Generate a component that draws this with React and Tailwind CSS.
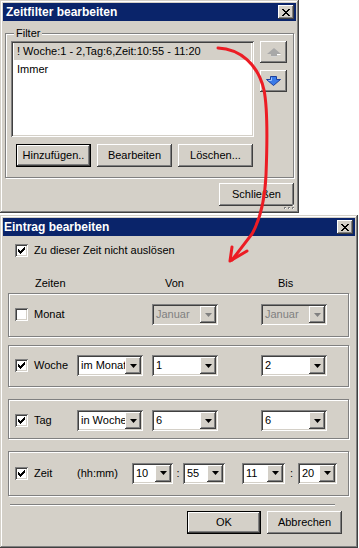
const WIN =
  "shadow-[inset_-1px_-1px_0_#404040,inset_1px_1px_0_#d4d0c8,inset_-2px_-2px_0_#808080,inset_2px_2px_0_#ffffff]";
const RAISED =
  "shadow-[inset_-1px_-1px_0_#404040,inset_1px_1px_0_#ffffff,inset_-2px_-2px_0_#808080,inset_2px_2px_0_#d4d0c8]";
const SUNKEN =
  "shadow-[inset_1px_1px_0_#808080,inset_-1px_-1px_0_#ffffff,inset_2px_2px_0_#404040,inset_-2px_-2px_0_#d4d0c8]";
const ETCHED = "border border-[#808080] shadow-[inset_1px_1px_0_#ffffff,1px_1px_0_#ffffff]";

const CloseGlyph = () => (
  <svg width="8" height="7" viewBox="0 0 8 7" shapeRendering="crispEdges">
    <path
      fill="#000"
      d="M0 0h2v1h-2zM6 0h2v1h-2zM1 1h2v1h-2zM5 1h2v1h-2zM2 2h4v1h-4zM3 3h2v1h-2zM2 4h4v1h-4zM1 5h2v1h-2zM5 5h2v1h-2zM0 6h2v1h-2zM6 6h2v1h-2z"
    />
  </svg>
);

const TitleBar = ({ title, pad }) => (
  <div className={`h-[18px] bg-[#0a246a] flex items-center justify-between ${pad}`}>
    <span className="text-white font-bold text-[12px] leading-none">{title}</span>
    <div className={`${RAISED} bg-[#d4d0c8] w-[16px] h-[14px] mr-[2px] flex items-center justify-center`}>
      <CloseGlyph />
    </div>
  </div>
);

const Button = ({ children, w, def }) => (
  <div
    className={`${def ? "border border-black" : ""} ${w} h-[23px] bg-[#d4d0c8] flex items-center justify-center`}
  >
    <div className={`${RAISED} w-full h-full flex items-center justify-center`}>{children}</div>
  </div>
);

const Check = ({ checked }) => (
  <div className={`${SUNKEN} w-[13px] h-[13px] bg-white shrink-0 flex items-center justify-center`}>
    {checked && (
      <svg width="7" height="7" viewBox="0 0 7 7" shapeRendering="crispEdges">
        <path
          fill="#000"
          d="M6 0h1v1h-1zM5 1h2v1h-2zM0 2h1v1h-1zM4 2h3v1h-3zM0 3h2v1h-2zM3 3h3v1h-3zM0 4h5v1h-5zM1 5h3v1h-3zM2 6h1v1h-1z"
        />
      </svg>
    )}
  </div>
);

const Combo = ({ value, w, disabled }) => (
  <div
    className={`${SUNKEN} ${w} h-[21px] p-[2px] flex items-center shrink-0 ${
      disabled ? "bg-[#d4d0c8]" : "bg-white"
    }`}
  >
    <span
      className={`flex-1 min-w-0 overflow-hidden whitespace-nowrap pl-[2px] ${
        disabled ? "text-[#808080]" : "text-black"
      }`}
    >
      {value}
    </span>
    <div className={`${RAISED} bg-[#d4d0c8] w-[16px] h-[17px] shrink-0 flex items-center justify-center`}>
      <svg width="7" height="4" viewBox="0 0 7 4">
        <path d="M0 0h7l-3.5 4z" fill={disabled ? "#808080" : "#000"} />
      </svg>
    </div>
  </div>
);

const Row = ({ h, extra, children }) => (
  <div className={`${ETCHED} ml-[5px] w-[341px] ${h} flex items-center pl-[6px] ${extra || ""}`}>{children}</div>
);

export default function App() {
  return (
    <div className="relative w-[359px] h-[548px] bg-white overflow-hidden font-['Liberation_Sans',Arial,sans-serif] text-[11px] text-black">
      {/* Zeitfilter window */}
      <div className={`absolute left-0 top-0 w-[299px] h-[213px] bg-[#d4d0c8] p-[3px] ${WIN} flex flex-col`}>
        <TitleBar title="Zeitfilter bearbeiten" pad="pl-[3px]" />
        <div className={`relative ml-[2px] mt-[12px] w-[289px] h-[145px] ${ETCHED}`}>
          <span className="absolute left-[8px] -top-[7px] bg-[#d4d0c8] px-[2px] leading-[13px]">Filter</span>
          <div className="flex pl-[5px] pt-[7px] gap-[6px]">
            <div className={`${SUNKEN} bg-white w-[243px] h-[96px] pt-[2px] px-[3px] flex flex-col`}>
              <div className="h-[17px] mb-[1px] bg-[#d4d0c8] pl-[3px] leading-[17px] whitespace-nowrap">
                ! Woche:1 - 2,Tag:6,Zeit:10:55 - 11:20
              </div>
              <div className="h-[17px] pl-[3px] leading-[17px]">Immer</div>
            </div>
            <div className="flex flex-col gap-[7px]">
              <div className={`${RAISED} w-[27px] h-[22px] flex items-center justify-center`}>
                <svg width="14" height="9" viewBox="0 0 14 9">
                  <path d="M7 0l7 6h-4v3h-6v-3h-4z" fill="#a8a8a8" />
                  <path d="M10 6.5h3.5M10 9h-6" stroke="#ffffff" strokeWidth="1" />
                </svg>
              </div>
              <div className={`${RAISED} w-[27px] h-[22px] flex items-center justify-center`}>
                <svg width="15" height="10" viewBox="0 0 15 10">
                  <path d="M4.5 0.5h6v3h4l-7 6l-7-6h4z" fill="#3a7ae8" stroke="#1b3f9e" strokeWidth="1" />
                  <path d="M5.5 1.5v3h-3" stroke="#9cc4ff" strokeWidth="1" fill="none" />
                </svg>
              </div>
            </div>
          </div>
          <div className="flex gap-[6px] pl-[10px] mt-[7px]">
            <Button w="w-[75px]" def>
              Hinzufügen..
            </Button>
            <Button w="w-[75px]">Bearbeiten</Button>
            <Button w="w-[75px]">Löschen...</Button>
          </div>
        </div>
        <div className="flex justify-end pr-[2px] mt-[5px]">
          <Button w="w-[75px]">Schließen</Button>
        </div>
        {/* size grip */}
        <svg className="absolute right-[4px] bottom-[3px]" width="12" height="6" viewBox="0 0 12 6" shapeRendering="crispEdges">
          <path
            fill="#808080"
            d="M1 3h2v2h-2zM5 3h2v2h-2zM9 3h2v2h-2zM9 0h2v2h-2zM5 0h0z"
          />
          <path fill="#ffffff" d="M2 4h1v1h-1zM6 4h1v1h-1zM10 4h1v1h-1zM10 1h1v1h-1z" />
        </svg>
      </div>

      {/* Eintrag window */}
      <div className={`absolute left-0 top-[215px] w-[358px] h-[333px] bg-[#d4d0c8] p-[3px] ${WIN} flex flex-col`}>
        <TitleBar title="Eintrag bearbeiten" pad="pl-[1px]" />
        <div className="flex items-center gap-[6px] ml-[12px] mt-[6px]">
          <Check checked />
          <span>Zu dieser Zeit nicht auslösen</span>
        </div>
        <div className="flex mt-[18px] pl-[32px] leading-[13px]">
          <span className="w-[130px]">Zeiten</span>
          <span className="w-[113px]">Von</span>
          <span>Bis</span>
        </div>
        <div className="mt-[3px]">
          <Row h="h-[44px]">
            <Check />
            <span className="ml-[6px] w-[43px]">Monat</span>
            <span className="w-[75px]" />
            <div className="w-[109px]">
              <Combo value="Januar" w="w-[66px]" disabled />
            </div>
            <Combo value="Januar" w="w-[66px]" disabled />
          </Row>
        </div>
        <div className="mt-[8px]">
          <Row h="h-[42px]">
            <Check checked />
            <span className="ml-[6px] w-[43px]">Woche</span>
            <div className="w-[75px]">
              <Combo value="im Monat" w="w-[66px]" />
            </div>
            <div className="w-[109px]">
              <Combo value="1" w="w-[66px]" />
            </div>
            <Combo value="2" w="w-[66px]" />
          </Row>
        </div>
        <div className="mt-[12px]">
          <Row h="h-[40px]" extra="pt-[4px]">
            <Check checked />
            <span className="ml-[6px] w-[43px]">Tag</span>
            <div className="w-[75px]">
              <Combo value="in Woche" w="w-[66px]" />
            </div>
            <div className="w-[109px]">
              <Combo value="6" w="w-[66px]" />
            </div>
            <Combo value="6" w="w-[66px]" />
          </Row>
        </div>
        <div className="mt-[12px]">
          <Row h="h-[45px]">
            <Check checked />
            <span className="ml-[6px] w-[43px]">Zeit</span>
            <span className="w-[55px]">(hh:mm)</span>
            <Combo value="10" w="w-[41px]" />
            <span className="w-[10px] text-center">:</span>
            <Combo value="55" w="w-[42px]" />
            <span className="w-[17px]" />
            <Combo value="11" w="w-[43px]" />
            <span className="w-[13px] text-center">:</span>
            <Combo value="20" w="w-[39px]" />
          </Row>
        </div>
        <div className="mt-[8px] ml-[7px] w-[325px] border-t border-t-[#808080] border-b border-b-white" />
        <div className="flex gap-[6px] ml-[184px] mt-[5px]">
          <Button w="w-[74px]" def>
            OK
          </Button>
          <Button w="w-[75px]">Abbrechen</Button>
        </div>
      </div>

      {/* red annotation arrow */}
      <svg className="absolute left-0 top-0 pointer-events-none" width="359" height="548" viewBox="0 0 359 548">
        <path
          d="M218 48 C240 49 258 64 264 90 C268 110 267 150 266 175 C265 197 262 216 252 234 L232 260"
          stroke="#ec1c24"
          strokeWidth="3"
          fill="none"
          strokeLinecap="round"
        />
        <path
          d="M232 247 L230 261 L247 251"
          stroke="#ec1c24"
          strokeWidth="3"
          fill="none"
          strokeLinecap="round"
          strokeLinejoin="round"
        />
      </svg>
    </div>
  );
}
